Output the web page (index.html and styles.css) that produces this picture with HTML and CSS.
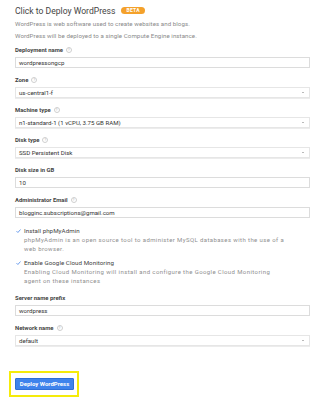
FILE: index.html
```html
<!DOCTYPE html>
<html>
<head>
<meta charset="utf-8">
<link rel="stylesheet" href="styles.css">
</head>
<body>
<div class="page">
  <div class="title">Click to Deploy WordPress <span class="beta">BETA</span></div>
  <p class="desc first">WordPress is web software used to create websites and blogs.</p>
  <p class="desc">WordPress will be deployed to a single Compute Engine instance.</p>

  <div class="field">
    <div class="label">Deployment name <span class="help">?</span></div>
    <div class="input">wordpressongcp</div>
  </div>
  <div class="field">
    <div class="label">Zone <span class="help">?</span></div>
    <div class="input select">us-central1-f<span class="arrow"></span></div>
  </div>
  <div class="field">
    <div class="label">Machine type <span class="help">?</span></div>
    <div class="input select">n1-standard-1 (1 vCPU, 3.75 GB RAM)<span class="arrow"></span></div>
  </div>
  <div class="field">
    <div class="label">Disk type <span class="help">?</span></div>
    <div class="input select">SSD Persistent Disk<span class="arrow"></span></div>
  </div>
  <div class="field">
    <div class="label">Disk size in GB</div>
    <div class="input">10</div>
  </div>
  <div class="field">
    <div class="label">Administrator Email <span class="help">?</span></div>
    <div class="input">blogginc.subscriptions@gmail.com</div>
  </div>

  <div class="check">
    <div class="check-row"><svg class="tick" viewBox="0 0 10 8"><path d="M1 4.2 L3.8 7 L9 1" fill="none" stroke="#4a86e8" stroke-width="1.6"/></svg><span>Install phpMyAdmin</span></div>
    <div class="check-desc">phpMyAdmin is an open source tool to administer MySQL databases with the use of a<br>web browser.</div>
  </div>
  <div class="check">
    <div class="check-row"><svg class="tick" viewBox="0 0 10 8"><path d="M1 4.2 L3.8 7 L9 1" fill="none" stroke="#4a86e8" stroke-width="1.6"/></svg><span>Enable Google Cloud Monitoring</span></div>
    <div class="check-desc">Enabling Cloud Monitoring will install and configure the Google Cloud Monitoring<br>agent on these instances</div>
  </div>

  <div class="field server">
    <div class="label">Server name prefix</div>
    <div class="input">wordpress</div>
  </div>
  <div class="field">
    <div class="label">Network name <span class="help">?</span></div>
    <div class="input select">default<span class="arrow"></span></div>
  </div>

  <div class="highlight">
    <button class="deploy">Deploy WordPress</button>
  </div>
</div>
</body>
</html>
```

FILE: styles.css
```css
html, body {
  margin: 0;
  padding: 0;
  background: #ffffff;
}
body {
  font-family: Roboto, "Liberation Sans", Arial, sans-serif;
  color: #333333;
}
.page {
  padding: 5px 10px 0 15px;
}
.title {
  font-size: 8.6px;
  line-height: 12px;
  height: 12px;
  color: #444444;
  display: flex;
  align-items: center;
  gap: 6px;
}
.beta {
  display: inline-block;
  background: #f4a12b;
  color: #ffffff;
  font-size: 5px;
  font-weight: 700;
  letter-spacing: 0.3px;
  line-height: 7px;
  height: 7px;
  padding: 0 5px;
  border-radius: 4px;
  margin-top: -1px;
}
.desc {
  margin: 0;
  font-size: 6.15px;
  letter-spacing: 0.07px;
  line-height: 12px;
  color: #8a8a8a;
}
.desc.first {
  margin-top: 1px;
}
.field {
  height: 30px;
}
.desc + .field {
  margin-top: 4px;
}
.label {
  font-size: 5.9px;
  font-weight: 700;
  line-height: 8px;
  height: 8px;
  color: #444444;
  margin-bottom: 3px;
  display: flex;
  align-items: center;
  gap: 3px;
}
.help {
  display: inline-block;
  width: 4px;
  height: 4px;
  border: 0.8px solid #cfcfcf;
  border-radius: 50%;
  color: #cfcfcf;
  font-size: 3.5px;
  line-height: 4px;
  text-align: center;
  font-weight: 700;
}
.input {
  box-sizing: border-box;
  height: 11px;
  border: 1px solid #dcdcdc;
  font-size: 6.1px;
  line-height: 9px;
  padding: 0 3px;
  color: #333333;
  display: flex;
  align-items: center;
  justify-content: space-between;
}
.select {
  border-color: #e6e6e6;
  box-shadow: 0 0.5px 0 #d8d8d8;
}
.arrow {
  width: 0;
  height: 0;
  border-left: 1.5px solid transparent;
  border-right: 1.5px solid transparent;
  border-top: 1.5px solid #777777;
  margin-right: 2px;
}
.check {
  margin-top: 1px;
  margin-bottom: 6px;
}
.check-row {
  display: flex;
  align-items: center;
  height: 8px;
  line-height: 8px;
  font-size: 6.2px;
  letter-spacing: 0.05px;
  color: #444444;
}
.tick {
  width: 5px;
  height: 4px;
  margin-left: 1px;
  margin-right: 3px;
}
.check-desc {
  padding-left: 9px;
  margin-right: -4px;
  font-size: 6px;
  letter-spacing: 0.4px;
  line-height: 9px;
  color: #8f8f8f;
}
.server {
  margin-top: 9px;
}
.highlight {
  margin-top: 17px;
  margin-left: -6px;
  width: 70px;
  height: 26px;
  box-sizing: border-box;
  border: 2px solid #f5eb0a;
  padding: 5px 0 0 4px;
}
.deploy {
  display: block;
  width: 59px;
  height: 12px;
  margin: 0;
  padding: 0;
  border: 1px solid #2f6fd6;
  border-radius: 1px;
  background: #3f83ec;
  color: #ffffff;
  font-family: Roboto, "Liberation Sans", Arial, sans-serif;
  font-size: 6px;
  font-weight: 700;
  line-height: 10px;
  text-align: center;
}
```
